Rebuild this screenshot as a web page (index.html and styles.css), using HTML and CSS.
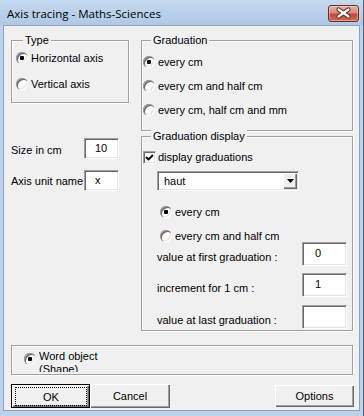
FILE: index.html
```html
<!DOCTYPE html>
<html>
<head>
<meta charset="utf-8">
<link rel="stylesheet" href="styles.css">
</head>
<body>
<div class="window">
  <div class="titlebar">
    <span class="title">Axis tracing - Maths-Sciences</span>
    <span class="close">
      <svg width="29" height="15" viewBox="0 0 29 15">
        <path d="M9.5 3.5 L19.5 10.5 M19.5 3.5 L9.5 10.5" stroke="#5c2420" stroke-width="4.2" stroke-linecap="round" fill="none"/>
        <path d="M9.5 3.5 L19.5 10.5 M19.5 3.5 L9.5 10.5" stroke="#ffffff" stroke-width="2.2" stroke-linecap="round" fill="none"/>
      </svg>
    </span>
  </div>
  <div class="client">
    <div class="top">
      <div class="col-left">
        <div class="group group-type">
          <span class="group-title">Type</span>
          <div class="opt"><span class="radio on"></span><span>Horizontal axis</span></div>
          <div class="opt"><span class="radio"></span><span>Vertical axis</span></div>
        </div>
        <div class="field field-size">
          <span class="field-label">Size in cm</span>
          <span class="input input-small">10</span>
        </div>
        <div class="field field-unit">
          <span class="field-label">Axis unit name</span>
          <span class="input input-small">x</span>
        </div>
      </div>
      <div class="col-right">
        <div class="group group-grad">
          <span class="group-title">Graduation</span>
          <div class="opt"><span class="radio on"></span><span>every cm</span></div>
          <div class="opt"><span class="radio"></span><span>every cm and half cm</span></div>
          <div class="opt"><span class="radio"></span><span>every cm, half cm and mm</span></div>
        </div>
        <div class="group group-display">
          <span class="group-title">Graduation display</span>
          <div class="check-row">
            <span class="checkbox">
              <svg width="9" height="9" viewBox="0 0 9 9"><path d="M1 4 L3.5 6.5 L8 2" stroke="#000" stroke-width="1.9" fill="none"/></svg>
            </span>
            <span>display graduations</span>
          </div>
          <div class="combo">
            <span class="combo-text">haut</span>
            <span class="combo-btn">
              <svg width="7" height="4" viewBox="0 0 7 4"><path d="M0 0 H7 L3.5 4 Z" fill="#000"/></svg>
            </span>
          </div>
          <div class="opt sub-opt sub-first"><span class="radio on"></span><span>every cm</span></div>
          <div class="opt sub-opt sub-second"><span class="radio"></span><span>every cm and half cm</span></div>
          <div class="value-row value-first">
            <span class="value-label">value at first graduation :</span>
            <span class="input input-wide">0</span>
          </div>
          <div class="value-row value-second">
            <span class="value-label">increment for 1 cm :</span>
            <span class="input input-wide">1</span>
          </div>
          <div class="value-row value-third">
            <span class="value-label">value at last graduation :</span>
            <span class="input input-wide"></span>
          </div>
        </div>
      </div>
    </div>
    <div class="group group-word">
      <span class="radio on word-radio"></span>
      <span class="word-label">Word object (Shape)</span>
    </div>
    <div class="buttons">
      <span class="btn btn-ok"><span class="focus">OK</span></span>
      <span class="btn btn-cancel">Cancel</span>
      <span class="btn btn-options">Options</span>
    </div>
  </div>
</div>
</body>
</html>
```
FILE: styles.css
```css
* { box-sizing: border-box; }

body {
  margin: 0;
  font-family: "Liberation Sans", Arial, sans-serif;
  font-size: 11px;
  color: #000;
  background: #f0f0f0;
}

.window {
  width: 364px;
  height: 416px;
  background: #bcd3eb;
  border-right: 1px solid #4a6180;
  display: flex;
  flex-direction: column;
}

.titlebar {
  height: 25px;
  flex: none;
  display: flex;
  align-items: center;
  justify-content: space-between;
  padding: 1px 4px 0 7px;
  background: linear-gradient(#c6d9ee, #afc8e4);
}

.title {
  font-family: "Open Sans", "Noto Sans", sans-serif;
  font-size: 11.5px;
  color: #000;
}

.close {
  width: 31px;
  height: 17px;
  border: 1px solid #6e2b25;
  border-radius: 3px;
  background: linear-gradient(#e6b0a6 0%, #d8897b 45%, #c4493a 55%, #cc6a58 100%);
  box-shadow: inset 0 0 0 1px rgba(255, 255, 255, 0.35);
  display: flex;
  align-items: center;
  justify-content: center;
}

.close svg { display: block; }

.client {
  margin: 0 3px;
  height: 386px;
  flex: none;
  border: 1px solid #8ba3c1;
  background: #f0f0f0;
  padding: 14px 6px 0 7px;
  display: flex;
  flex-direction: column;
}

.top {
  display: flex;
  gap: 12px;
}

.col-left {
  width: 118px;
  display: flex;
  flex-direction: column;
}

.col-right {
  width: 212px;
  display: flex;
  flex-direction: column;
}

.group {
  position: relative;
  border: 1px solid #a0a0a0;
  box-shadow: inset 1px 1px 0 #fff, 1px 1px 0 #fff;
}

.group-title {
  position: absolute;
  top: -7px;
  left: 9px;
  padding: 0 2px;
  background: #f0f0f0;
  line-height: 13px;
  white-space: nowrap;
}

.group-type .group-title { left: 11px; }

.opt {
  display: flex;
  align-items: center;
  gap: 3px;
  white-space: nowrap;
}

.radio {
  width: 12px;
  height: 12px;
  flex: none;
  border-radius: 50%;
  background: #fff;
  position: relative;
  box-shadow: inset 1px 1px 0 #a0a0a0, inset 2px 2px 0 #696969, inset -1px -1px 0 #fff, inset -2px -2px 0 #e3e3e3;
}

.radio.on::after {
  content: "";
  position: absolute;
  left: 4px;
  top: 4px;
  width: 4px;
  height: 4px;
  border-radius: 1px;
  background: #000;
}

.group-type {
  height: 63px;
  padding: 4px 0 0 4px;
}

.group-type .opt { height: 26px; }

.field {
  display: flex;
  align-items: flex-start;
}

.field-label {
  width: 73px;
  line-height: 13px;
  white-space: nowrap;
}

.field-size { margin-top: 35px; }
.field-size .field-label { padding-top: 6px; }
.field-unit { margin-top: 11px; }
.field-unit .field-label { padding-top: 5px; }

.input {
  background: #fff;
  border: 1px solid;
  border-color: #a0a0a0 #fff #fff #a0a0a0;
  box-shadow: inset 1px 1px 0 #696969, inset -1px -1px 0 #e3e3e3;
  line-height: 13px;
}

.input-small {
  width: 35px;
  height: 21px;
  padding: 3px 0 0 10px;
}

.group-grad {
  height: 91px;
  padding: 9px 0 0 1px;
}

.group-grad .opt { height: 24px; }

.group-display {
  height: 195px;
  margin-top: 5px;
  padding: 13px 5px 0 1px;
  display: flex;
  flex-direction: column;
}

.check-row {
  height: 14px;
  display: flex;
  align-items: center;
  gap: 2px;
}

.checkbox {
  width: 13px;
  height: 13px;
  flex: none;
  background: #fff;
  border: 1px solid;
  border-color: #a0a0a0 #fff #fff #a0a0a0;
  box-shadow: inset 1px 1px 0 #696969, inset -1px -1px 0 #e3e3e3;
  display: flex;
  align-items: center;
  justify-content: center;
}

.checkbox svg { display: block; }

.combo {
  margin: 7px 0 0 14px;
  width: 142px;
  height: 20px;
  display: flex;
  background: #fff;
  border: 1px solid;
  border-color: #a0a0a0 #fff #fff #a0a0a0;
  box-shadow: inset 1px 1px 0 #696969, inset -1px -1px 0 #e3e3e3;
  padding: 1px;
}

.combo-text {
  flex: 1;
  padding: 2px 0 0 5px;
  line-height: 13px;
}

.combo-btn {
  width: 14px;
  height: 16px;
  background: #f0f0f0;
  box-shadow: inset 1px 1px 0 #fff, inset -1px -1px 0 #696969, inset -2px -2px 0 #a0a0a0;
  display: flex;
  align-items: center;
  justify-content: center;
  padding-bottom: 1px;
}

.combo-btn svg { display: block; }

.sub-opt {
  height: 12px;
  margin-left: 17px;
  line-height: 12px;
}

.sub-first { margin-top: 15px; }
.sub-second { margin-top: 12px; }

.value-row {
  display: flex;
  justify-content: space-between;
  align-items: flex-start;
  height: 24px;
  margin-left: 14px;
}

.value-second { margin-top: 7px; }
.value-third { margin-top: 8px; }

.value-label {
  padding-top: 9px;
  line-height: 13px;
  white-space: nowrap;
}

.input-wide {
  width: 45px;
  height: 24px;
  padding: 4px 0 0 12px;
}

.group-word {
  height: 30px;
  margin-top: 14px;
  padding: 4px 0 0 12px;
  display: flex;
  align-items: flex-start;
  gap: 3px;
}

.word-radio { margin-top: 3px; }

.word-label {
  width: 70px;
  height: 22px;
  overflow: hidden;
  line-height: 13px;
}

.buttons {
  display: flex;
  align-items: flex-start;
  margin-top: 9px;
}

.btn {
  height: 24px;
  display: flex;
  align-items: center;
  justify-content: center;
  background: #f0f0f0;
  box-shadow: inset 1px 1px 0 #fff, inset -1px -1px 0 #696969, inset -2px -2px 0 #a0a0a0;
}

.btn-ok {
  width: 79px;
  border: 1px solid #000;
  padding: 2px 2px 1px 3px;
}

.focus {
  flex: 1;
  align-self: stretch;
  border: 1px dotted #000;
  display: flex;
  align-items: center;
  justify-content: center;
}

.btn-cancel { width: 80px; }

.btn-options {
  width: 79px;
  height: 22px;
  margin: 1px -1px 0 auto;
}
```
